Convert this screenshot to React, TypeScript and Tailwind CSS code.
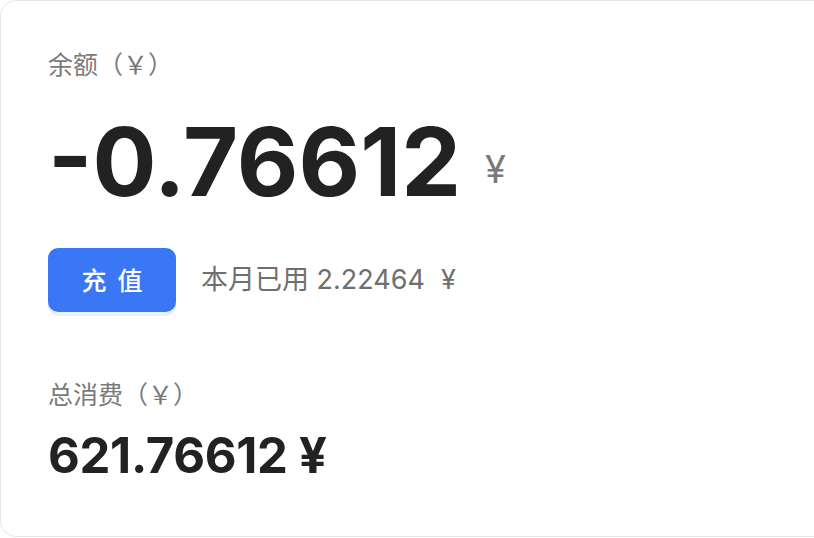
import React from "react";

export default function App() {
  return (
    <div className="w-[814px] h-[538px] overflow-hidden bg-white font-['Inter','Noto_Sans_CJK_SC',sans-serif]">
      <div className="w-[860px] h-[537px] rounded-2xl border border-[#e6e6e6] bg-white pl-[47px] pt-[46px] flex flex-col items-start">
        <div className="text-[25px] leading-[32px] text-[#7a7a7a] font-['Noto_Sans_CJK_SC',sans-serif] [text-spacing-trim:space-all]">
          余额（￥）
        </div>
        <div className="mt-[35px] flex items-center">
          <span className="text-[95px] leading-[96px] font-bold text-[#222222]">-0.76612</span>
          <span className="ml-[24px] mt-[14px] text-[38px] leading-[40px] text-[#7a7a7a]">¥</span>
        </div>
        <div className="mt-[38px] flex items-center">
          <button className="w-[128px] h-[64px] rounded-[10px] bg-[#3a77f5] text-white text-[25px] font-medium tracking-[11px] pl-[11px] shadow-[0_4px_0_#e8f1ff] font-['Noto_Sans_CJK_SC',sans-serif]">
            充值
          </button>
          <span className="ml-[25px] text-[27px] leading-[32px] text-[#6f6f6f]">
            本月已用 2.22464<span className="ml-[16px]">¥</span>
          </span>
        </div>
        <div className="mt-[65px] text-[25px] leading-[32px] text-[#7a7a7a] font-['Noto_Sans_CJK_SC',sans-serif] [text-spacing-trim:space-all]">
          总消费（￥）
        </div>
        <div className="mt-[21px] text-[49px] leading-[52px] font-bold text-[#222222] tracking-[-0.3px]">
          621.76612 ¥
        </div>
      </div>
    </div>
  );
}
